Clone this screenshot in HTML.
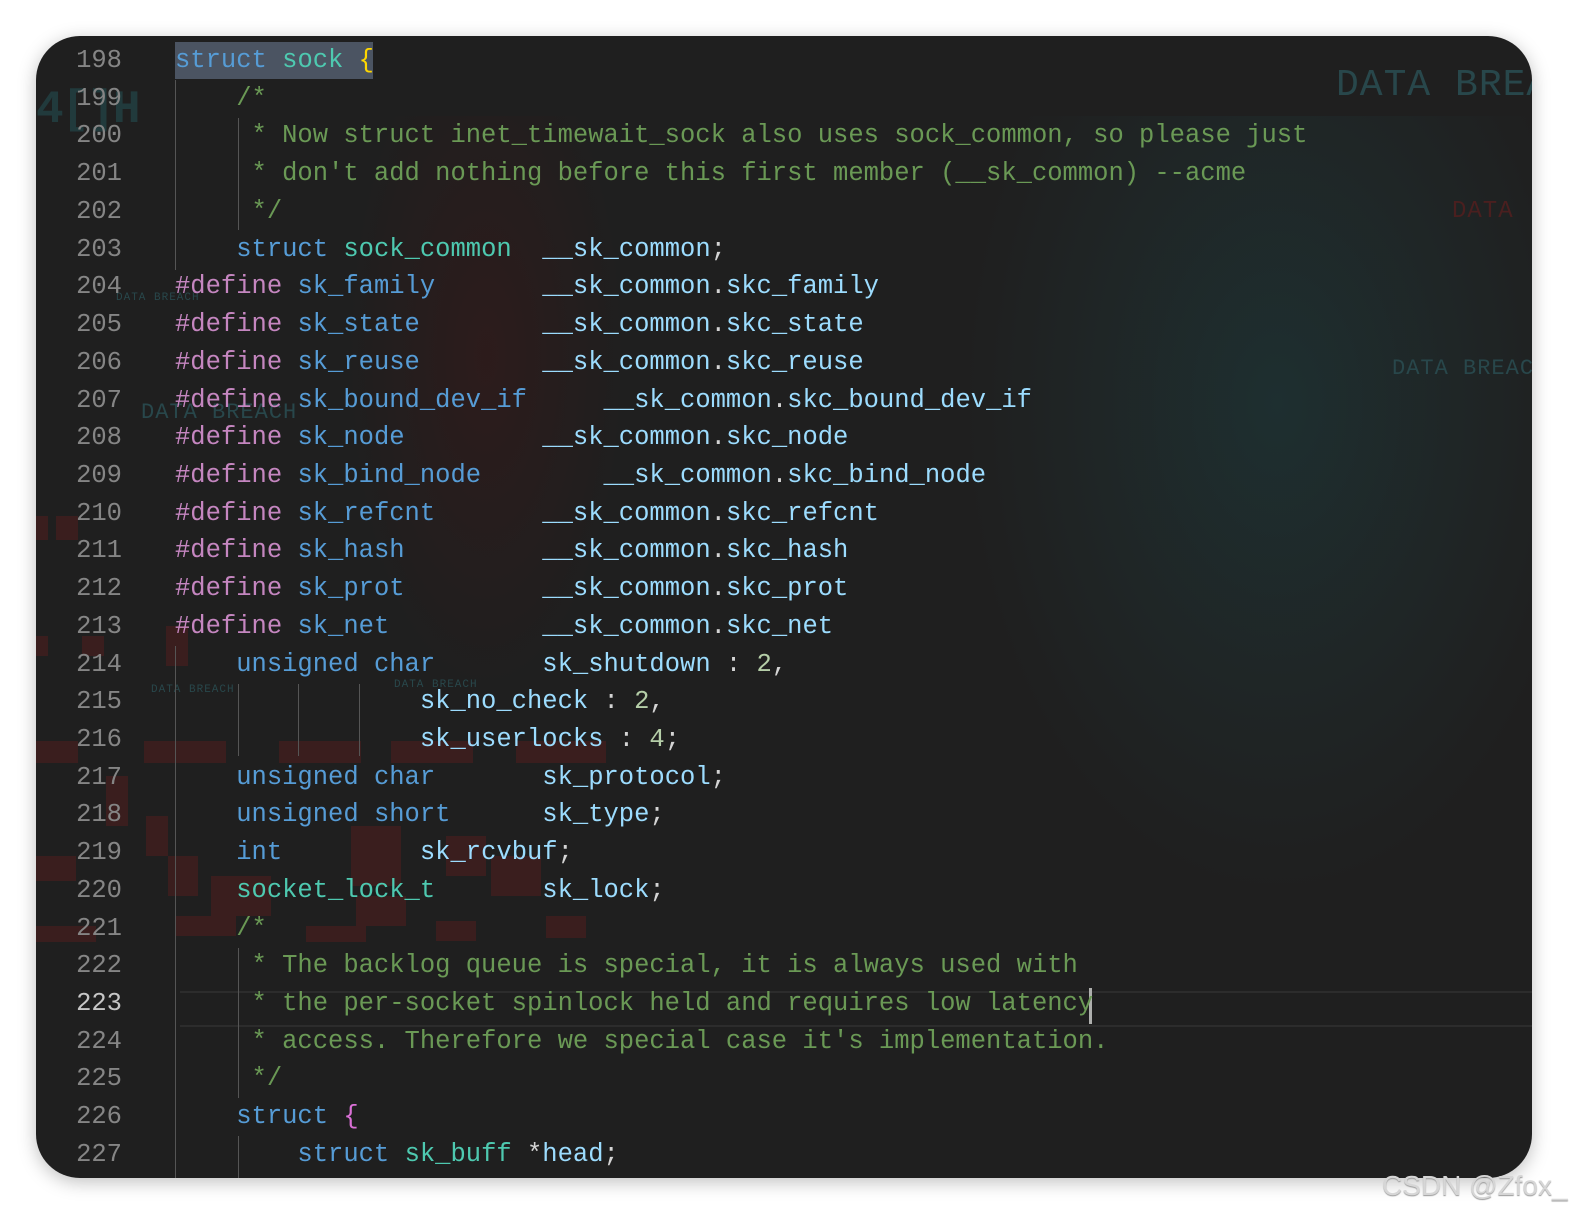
<!DOCTYPE html>
<html><head><meta charset="utf-8"><style>
html,body{margin:0;padding:0;background:#fff;width:1580px;height:1224px;overflow:hidden}
#panel{position:absolute;left:36px;top:36px;width:1496px;height:1142px;background:#1f1f1f;border-radius:44px;overflow:hidden;box-shadow:0 4px 18px rgba(0,0,0,.25)}
.ln,.cd{position:absolute;font-family:"Liberation Mono",monospace;font-size:25.5px;line-height:37.72px;white-space:pre;height:37.72px}
.ln{left:0;width:86px;text-align:right;color:#858585}
.cd{left:139px;color:#d4d4d4}
.k{color:#569cd6}.t{color:#4ec9b0}.c{color:#6a9955}.v{color:#9cdcfe}.d{color:#c586c0}.n{color:#b5cea8}.y{color:#ffd700}.p{color:#da70d6}
.g{position:absolute;width:1px;background:#555}
.sq{position:absolute;background:#3a1e1e}
.bt{position:absolute;font-family:"Liberation Mono",monospace;letter-spacing:1px;white-space:nowrap}
</style></head><body>
<div id="panel">
<div style="position:absolute;left:900px;top:80px;width:620px;height:820px;background:radial-gradient(ellipse at 55% 35%,rgba(30,60,62,.55),rgba(31,31,31,0) 65%)"></div>
<div style="position:absolute;left:300px;top:80px;width:300px;height:600px;background:radial-gradient(ellipse at 50% 40%,rgba(70,20,20,.35),rgba(31,31,31,0) 65%)"></div>
<div class="bt" style="left:1300px;top:28px;font-size:38px;color:#28474b">DATA BREA</div>
<div class="bt" style="left:1416px;top:162px;font-size:24px;color:#4a1f1f">DATA</div>
<div class="bt" style="left:1356px;top:320px;font-size:22px;color:#28474b">DATA BREAC</div>
<div class="bt" style="left:105px;top:364px;font-size:22px;color:#28474b">DATA BREACH</div>
<div class="bt" style="left:80px;top:256px;font-size:11px;color:#28474b">DATA BREACH</div>
<div class="bt" style="left:115px;top:648px;font-size:11px;color:#28474b">DATA BREACH</div>
<div class="bt" style="left:358px;top:643px;font-size:11px;color:#28474b">DATA BREACH</div>
<div class="bt" style="left:0px;top:48px;font-size:46px;color:#213a3c;font-weight:bold;letter-spacing:-2px">4[]H</div>
<div class="sq" style="left:0;top:480px;width:12px;height:24px"></div>
<div class="sq" style="left:20px;top:480px;width:22px;height:24px"></div>
<div class="sq" style="left:46px;top:600px;width:22px;height:20px"></div>
<div class="sq" style="left:0;top:600px;width:12px;height:20px"></div>
<div class="sq" style="left:0;top:705px;width:42px;height:22px"></div>
<div class="sq" style="left:108px;top:705px;width:82px;height:22px"></div>
<div class="sq" style="left:243px;top:705px;width:82px;height:22px"></div>
<div class="sq" style="left:355px;top:705px;width:82px;height:22px"></div>
<div class="sq" style="left:480px;top:705px;width:90px;height:22px"></div>
<div class="sq" style="left:70px;top:740px;width:22px;height:50px"></div>
<div class="sq" style="left:110px;top:780px;width:22px;height:40px"></div>
<div class="sq" style="left:132px;top:820px;width:30px;height:40px"></div>
<div class="sq" style="left:0;top:820px;width:40px;height:25px"></div>
<div class="sq" style="left:315px;top:790px;width:50px;height:60px"></div>
<div class="sq" style="left:410px;top:800px;width:40px;height:40px"></div>
<div class="sq" style="left:455px;top:820px;width:50px;height:40px"></div>
<div class="sq" style="left:175px;top:840px;width:60px;height:40px"></div>
<div class="sq" style="left:320px;top:860px;width:50px;height:30px"></div>
<div class="sq" style="left:0;top:890px;width:60px;height:16px"></div>
<div class="sq" style="left:140px;top:880px;width:60px;height:20px"></div>
<div class="sq" style="left:270px;top:890px;width:60px;height:16px"></div>
<div class="sq" style="left:400px;top:885px;width:40px;height:20px"></div>
<div class="sq" style="left:510px;top:880px;width:40px;height:22px"></div>
<div class="sq" style="left:130px;top:590px;width:22px;height:40px"></div>

<div style="position:absolute;left:139px;top:6px;width:198px;height:37px;background:#4b5462"></div>
<div style="position:absolute;left:144px;top:955px;width:1360px;height:32px;border-top:2px solid #2c2c2c;border-bottom:2px solid #2c2c2c"></div>
<div style="position:absolute;left:1053px;top:952px;width:3px;height:36px;background:#aeafad"></div>

<div class="g" style="left:139px;top:44px;height:190px"></div>
<div class="g" style="left:202px;top:82px;height:112px"></div>
<div class="g" style="left:139px;top:610px;height:532px"></div>
<div class="g" style="left:202px;top:648px;height:72px"></div>
<div class="g" style="left:262px;top:648px;height:72px"></div>
<div class="g" style="left:323px;top:648px;height:72px"></div>
<div class="g" style="left:202px;top:912px;height:150px"></div>
<div class="g" style="left:202px;top:1100px;height:42px"></div>

<div class="ln" style="top:6.0px">198</div><div class="cd" style="top:6.0px"><span class="k">struct</span> <span class="t">sock</span> <span class="y">{</span></div>
<div class="ln" style="top:43.7px">199</div><div class="cd" style="top:43.7px">    <span class="c">/*</span></div>
<div class="ln" style="top:81.4px">200</div><div class="cd" style="top:81.4px">     <span class="c">* Now struct inet_timewait_sock also uses sock_common, so please just</span></div>
<div class="ln" style="top:119.2px">201</div><div class="cd" style="top:119.2px">     <span class="c">* don't add nothing before this first member (__sk_common) --acme</span></div>
<div class="ln" style="top:156.9px">202</div><div class="cd" style="top:156.9px">     <span class="c">*/</span></div>
<div class="ln" style="top:194.6px">203</div><div class="cd" style="top:194.6px">    <span class="k">struct</span> <span class="t">sock_common</span>  <span class="v">__sk_common</span>;</div>
<div class="ln" style="top:232.3px">204</div><div class="cd" style="top:232.3px"><span class="d">#define</span> <span class="k">sk_family</span>       <span class="v">__sk_common</span>.<span class="v">skc_family</span></div>
<div class="ln" style="top:270.0px">205</div><div class="cd" style="top:270.0px"><span class="d">#define</span> <span class="k">sk_state</span>        <span class="v">__sk_common</span>.<span class="v">skc_state</span></div>
<div class="ln" style="top:307.8px">206</div><div class="cd" style="top:307.8px"><span class="d">#define</span> <span class="k">sk_reuse</span>        <span class="v">__sk_common</span>.<span class="v">skc_reuse</span></div>
<div class="ln" style="top:345.5px">207</div><div class="cd" style="top:345.5px"><span class="d">#define</span> <span class="k">sk_bound_dev_if</span>     <span class="v">__sk_common</span>.<span class="v">skc_bound_dev_if</span></div>
<div class="ln" style="top:383.2px">208</div><div class="cd" style="top:383.2px"><span class="d">#define</span> <span class="k">sk_node</span>         <span class="v">__sk_common</span>.<span class="v">skc_node</span></div>
<div class="ln" style="top:420.9px">209</div><div class="cd" style="top:420.9px"><span class="d">#define</span> <span class="k">sk_bind_node</span>        <span class="v">__sk_common</span>.<span class="v">skc_bind_node</span></div>
<div class="ln" style="top:458.6px">210</div><div class="cd" style="top:458.6px"><span class="d">#define</span> <span class="k">sk_refcnt</span>       <span class="v">__sk_common</span>.<span class="v">skc_refcnt</span></div>
<div class="ln" style="top:496.4px">211</div><div class="cd" style="top:496.4px"><span class="d">#define</span> <span class="k">sk_hash</span>         <span class="v">__sk_common</span>.<span class="v">skc_hash</span></div>
<div class="ln" style="top:534.1px">212</div><div class="cd" style="top:534.1px"><span class="d">#define</span> <span class="k">sk_prot</span>         <span class="v">__sk_common</span>.<span class="v">skc_prot</span></div>
<div class="ln" style="top:571.8px">213</div><div class="cd" style="top:571.8px"><span class="d">#define</span> <span class="k">sk_net</span>          <span class="v">__sk_common</span>.<span class="v">skc_net</span></div>
<div class="ln" style="top:609.5px">214</div><div class="cd" style="top:609.5px">    <span class="k">unsigned</span> <span class="k">char</span>       <span class="v">sk_shutdown</span> : <span class="n">2</span>,</div>
<div class="ln" style="top:647.2px">215</div><div class="cd" style="top:647.2px">                <span class="v">sk_no_check</span> : <span class="n">2</span>,</div>
<div class="ln" style="top:685.0px">216</div><div class="cd" style="top:685.0px">                <span class="v">sk_userlocks</span> : <span class="n">4</span>;</div>
<div class="ln" style="top:722.7px">217</div><div class="cd" style="top:722.7px">    <span class="k">unsigned</span> <span class="k">char</span>       <span class="v">sk_protocol</span>;</div>
<div class="ln" style="top:760.4px">218</div><div class="cd" style="top:760.4px">    <span class="k">unsigned</span> <span class="k">short</span>      <span class="v">sk_type</span>;</div>
<div class="ln" style="top:798.1px">219</div><div class="cd" style="top:798.1px">    <span class="k">int</span>         <span class="v">sk_rcvbuf</span>;</div>
<div class="ln" style="top:835.8px">220</div><div class="cd" style="top:835.8px">    <span class="t">socket_lock_t</span>       <span class="v">sk_lock</span>;</div>
<div class="ln" style="top:873.6px">221</div><div class="cd" style="top:873.6px">    <span class="c">/*</span></div>
<div class="ln" style="top:911.3px">222</div><div class="cd" style="top:911.3px">     <span class="c">* The backlog queue is special, it is always used with</span></div>
<div class="ln" style="top:949.0px;color:#c6c6c6">223</div><div class="cd" style="top:949.0px">     <span class="c">* the per-socket spinlock held and requires low latency</span></div>
<div class="ln" style="top:986.7px">224</div><div class="cd" style="top:986.7px">     <span class="c">* access. Therefore we special case it's implementation.</span></div>
<div class="ln" style="top:1024.4px">225</div><div class="cd" style="top:1024.4px">     <span class="c">*/</span></div>
<div class="ln" style="top:1062.2px">226</div><div class="cd" style="top:1062.2px">    <span class="k">struct</span> <span class="p">{</span></div>
<div class="ln" style="top:1099.9px">227</div><div class="cd" style="top:1099.9px">        <span class="k">struct</span> <span class="t">sk_buff</span> *<span class="v">head</span>;</div>
</div>
<div style="position:absolute;left:1382px;top:1170px;font-family:'Liberation Sans',sans-serif;font-size:28px;color:#d6d6d6;text-shadow:0 1px 1px #999;white-space:nowrap">CSDN @Zfox_</div>
</body></html>
